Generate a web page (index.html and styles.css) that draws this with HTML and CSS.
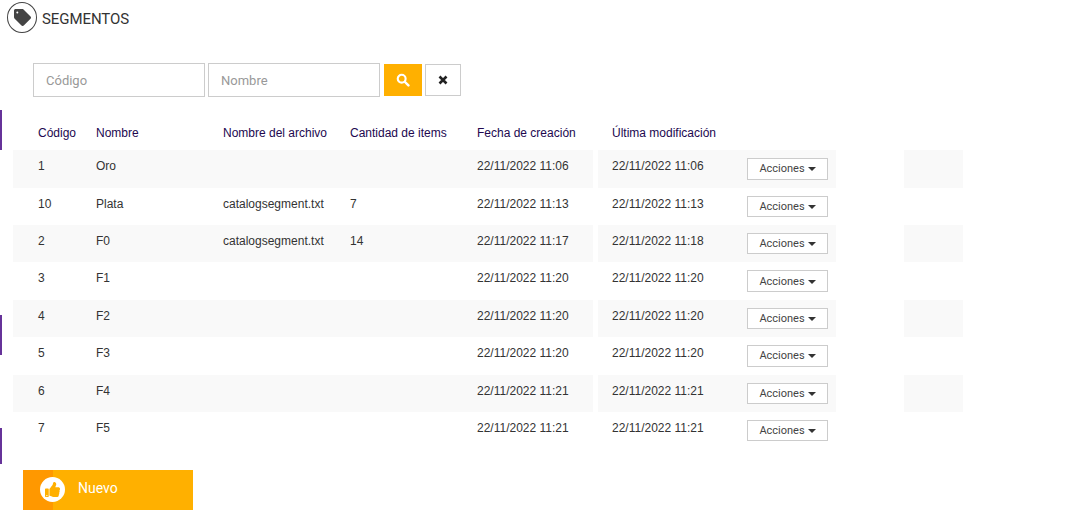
FILE: index.html
```html
<!DOCTYPE html>
<html lang="es">
<head>
<meta charset="utf-8">
<title>Segmentos</title>
<link rel="stylesheet" href="styles.css">
</head>
<body>
<span class="edge edge-a"></span>
<span class="edge edge-b"></span>
<span class="edge edge-c"></span>
<header class="title">
  <span class="title-icon">
    <svg viewBox="0 0 512 512" width="17" height="17"><path fill="#444" fill-rule="evenodd" d="M0 252V48C0 21 21 0 48 0h204c13 0 25 5 34 14l212 212c19 19 19 49 0 68L294 498c-19 19-49 19-68 0L14 286C5 277 0 265 0 252zM100 72a30 30 0 1 0 0 60 30 30 0 0 0 0-60z"/></svg>
  </span>
  <h1>SEGMENTOS</h1>
</header>
<form class="filters">
  <input class="field field-code" type="text" placeholder="Código">
  <input class="field field-name" type="text" placeholder="Nombre">
  <button class="btn-search" type="button" aria-label="Buscar">
    <svg viewBox="0 0 16 16" width="14" height="14"><circle cx="6.5" cy="6.5" r="4.5" fill="none" stroke="#fff" stroke-width="2.4"/><path d="M10 10l4.2 4.2" stroke="#fff" stroke-width="2.8" stroke-linecap="round"/></svg>
  </button>
  <button class="btn-clear" type="button" aria-label="Limpiar">
    <svg viewBox="0 0 10 10" width="10" height="10"><path d="M1.5 1.5l7 7M8.5 1.5l-7 7" stroke="#222" stroke-width="2.6"/></svg>
  </button>
</form>
<section class="table">
  <div class="row head">
    <div class="c first">Código</div><div class="c">Nombre</div><div class="c">Nombre del archivo</div><div class="c">Cantidad de items</div><div class="c">Fecha de creación</div><div class="gap"></div><div class="c mod">Última modificación</div><div class="c"></div><div class="gap"></div><div class="c"></div>
  </div>
  <div class="row alt">
    <div class="c first">1</div><div class="c">Oro</div><div class="c"></div><div class="c"></div><div class="c">22/11/2022 11:06</div><div class="gap"></div><div class="c mod">22/11/2022 11:06</div><div class="c"><button class="actions" type="button">Acciones<i class="caret"></i></button></div><div class="gap"></div><div class="c"></div>
  </div>
  <div class="row">
    <div class="c first">10</div><div class="c">Plata</div><div class="c">catalogsegment.txt</div><div class="c">7</div><div class="c">22/11/2022 11:13</div><div class="gap"></div><div class="c mod">22/11/2022 11:13</div><div class="c"><button class="actions" type="button">Acciones<i class="caret"></i></button></div><div class="gap"></div><div class="c"></div>
  </div>
  <div class="row alt">
    <div class="c first">2</div><div class="c">F0</div><div class="c">catalogsegment.txt</div><div class="c">14</div><div class="c">22/11/2022 11:17</div><div class="gap"></div><div class="c mod">22/11/2022 11:18</div><div class="c"><button class="actions" type="button">Acciones<i class="caret"></i></button></div><div class="gap"></div><div class="c"></div>
  </div>
  <div class="row">
    <div class="c first">3</div><div class="c">F1</div><div class="c"></div><div class="c"></div><div class="c">22/11/2022 11:20</div><div class="gap"></div><div class="c mod">22/11/2022 11:20</div><div class="c"><button class="actions" type="button">Acciones<i class="caret"></i></button></div><div class="gap"></div><div class="c"></div>
  </div>
  <div class="row alt">
    <div class="c first">4</div><div class="c">F2</div><div class="c"></div><div class="c"></div><div class="c">22/11/2022 11:20</div><div class="gap"></div><div class="c mod">22/11/2022 11:20</div><div class="c"><button class="actions" type="button">Acciones<i class="caret"></i></button></div><div class="gap"></div><div class="c"></div>
  </div>
  <div class="row">
    <div class="c first">5</div><div class="c">F3</div><div class="c"></div><div class="c"></div><div class="c">22/11/2022 11:20</div><div class="gap"></div><div class="c mod">22/11/2022 11:20</div><div class="c"><button class="actions" type="button">Acciones<i class="caret"></i></button></div><div class="gap"></div><div class="c"></div>
  </div>
  <div class="row alt">
    <div class="c first">6</div><div class="c">F4</div><div class="c"></div><div class="c"></div><div class="c">22/11/2022 11:21</div><div class="gap"></div><div class="c mod">22/11/2022 11:21</div><div class="c"><button class="actions" type="button">Acciones<i class="caret"></i></button></div><div class="gap"></div><div class="c"></div>
  </div>
  <div class="row">
    <div class="c first">7</div><div class="c">F5</div><div class="c"></div><div class="c"></div><div class="c">22/11/2022 11:21</div><div class="gap"></div><div class="c mod">22/11/2022 11:21</div><div class="c"><button class="actions" type="button">Acciones<i class="caret"></i></button></div><div class="gap"></div><div class="c"></div>
  </div>
</section>
<button class="new" type="button">
  <span class="new-tab"><span class="new-dot">
    <svg viewBox="0 0 512 512" width="15" height="15"><path fill="#ffb000" fill-rule="evenodd" d="M104 224H24c-13 0-24 11-24 24v240c0 13 11 24 24 24h80c13 0 24-11 24-24V248c0-13-11-24-24-24zM64 440a24 24 0 1 1 0 48 24 24 0 0 1 0-48zM384 81c0 42-26 66-33 95h102c34 0 60 28 60 59 0 19-8 39-20 52 10 24 9 57-9 81 9 26 0 58-16 75 4 18 2 33-7 45-21 30-73 30-117 30h-3c-50 0-91-18-124-33-17-7-38-16-54-16-7 0-12-6-12-12V243c0-3 1-6 4-9 40-39 57-81 90-114 15-15 20-38 25-60 5-19 14-60 36-60 25 0 78 8 78 81z"/></svg>
  </span></span>
  <span class="new-label">Nuevo</span>
</button>
</body>
</html>
```
FILE: styles.css
```css
* { box-sizing: border-box; }
html, body { margin: 0; padding: 0; }
body {
  position: relative;
  height: 531px;
  overflow: hidden;
  background: #fff;
  font-family: "Liberation Sans", Arial, sans-serif;
  font-size: 12px;
  color: #333;
}
.edge { position: absolute; left: 0; width: 2px; background: #663399; }
.edge-a { top: 110px; height: 40px; }
.edge-b { top: 315px; height: 40px; }
.edge-c { top: 428px; height: 36px; }

.title { display: flex; align-items: center; gap: 5px; height: 31px; margin: 2px 0 0 7px; font-family: Roboto, sans-serif; }
.title-icon {
  width: 30px; height: 31px; border: 1px solid #444; border-radius: 50%;
  display: flex; align-items: center; justify-content: center;
}
.title h1 { margin: 0; padding-top: 2px; font-size: 15px; font-weight: 400; color: #333; letter-spacing: -0.07px; }

.filters { display: flex; align-items: center; margin: 30px 0 0 33px; height: 34px; }
.field {
  height: 34px; border: 1px solid #ccc; background: #fff; padding: 0 12px;
  font: 13px Roboto, sans-serif; outline: 0; border-radius: 0;
}
.field::placeholder { color: #999; opacity: 1; }
.field-code { width: 172px; margin-right: 3px; }
.field-name { width: 172px; margin-right: 4px; }
.btn-search {
  width: 38px; height: 32px; margin-right: 3px; padding: 0; border: 0; background: #ffb000;
  display: flex; align-items: center; justify-content: center;
}
.btn-clear {
  width: 36px; height: 32px; padding: 0; border: 1px solid #ccc; background: #fff;
  display: flex; align-items: center; justify-content: center;
}

.table { margin: 16px 0 0 13px; width: 950px; }
.row {
  display: grid;
  grid-template-columns: 83px 127px 127px 127px 116px 5px 149px 89px 68px 59px;
  height: 37.4px;
}
.row.head { height: 37.2px; color: #22084f; }
.c { padding-top: 9px; line-height: 14px; }
.first { padding-left: 25px; }
.mod { padding-left: 14px; }
.alt .c { background: #f9f9f9; }
.head .c { padding-top: 13px; }
.actions {
  display: block; width: 81px; height: 21.4px; padding: 0;
  border: 1px solid #ccc; background: #fff; color: #444;
  font: 11px Roboto, sans-serif; border-radius: 0;
}
.row .c:has(.actions) { padding-top: 8px; }
.caret {
  display: inline-block; margin-left: 3px; vertical-align: middle;
  border-top: 4px solid #333; border-left: 4px solid transparent; border-right: 4px solid transparent;
}

.new {
  display: flex; align-items: center; width: 170px; height: 40px; margin: 20.6px 0 0 23px;
  padding: 0; border: 0; background: #ffb000; color: #fff; text-align: left;
}
.new-tab {
  width: 30px; height: 40px; background: #ff9800; position: relative; flex: none;
}
.new-dot {
  position: absolute; left: 17px; top: 7px; width: 25px; height: 25px; border-radius: 50%;
  background: #fff; display: flex; align-items: center; justify-content: center;
}
.new-label { margin-left: 25px; padding-bottom: 4px; font: 14px Roboto, sans-serif; }
```
